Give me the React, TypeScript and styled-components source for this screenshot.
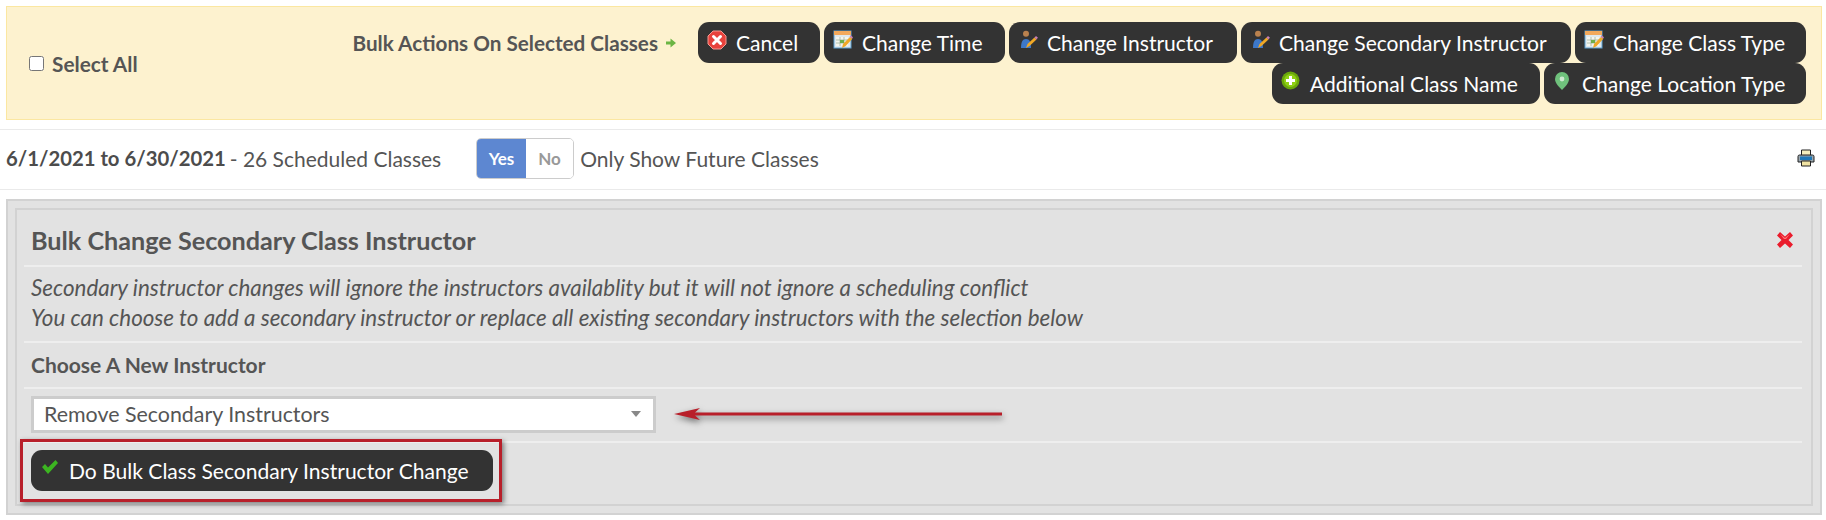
import React from "react";
import styled, { createGlobalStyle } from "styled-components";

const Global = createGlobalStyle`
  html, body { margin: 0; padding: 0; background: #fff; }
  body { font-family: Lato, "Open Sans", "Liberation Sans", sans-serif; color: #555; }
  * { box-sizing: border-box; }
`;

const Page = styled.div`
  position: relative;
  width: 1826px;
  height: 520px;
  padding-top: 6px;
  overflow: hidden;
`;

const BulkBar = styled.div`
  display: flex;
  align-items: center;
  height: 114px;
  margin: 0 4px 0 6px;
  padding: 0 15px 0 22px;
  background: #fdf2cf;
  border: 1px solid #fbe7a1;
`;

const SelectAllLabel = styled.label`
  display: flex;
  align-items: center;
  gap: 8px;
  flex: none;
  font-size: 20.8px;
  font-weight: 700;
  color: #555;
`;

const Check = styled.input`
  width: 15px;
  height: 15px;
  margin: 0;
`;

const Actions = styled.div`
  flex: 1;
  align-self: flex-start;
  display: flex;
  flex-wrap: wrap;
  justify-content: flex-end;
  align-items: flex-start;
  column-gap: 4px;
  padding-top: 15px;
  padding-left: 200px;
`;

const ActionsTitle = styled.div`
  display: flex;
  align-items: center;
  height: 41px;
  margin-right: 18px;
  font-size: 20.7px;
  font-weight: 700;
  color: #555;
  svg { margin-left: 8px; }
`;

const DarkButton = styled.button<{ $w: number }>`
  display: flex;
  align-items: center;
  width: ${(p) => p.$w}px;
  height: 41px;
  padding: 0 0 0 9px;
  background: #333;
  border: 0;
  border-radius: 11px;
  color: #fff;
  font-family: inherit;
  font-size: 21.05px;
  white-space: nowrap;
`;

const IconSlot = styled.span`
  display: flex;
  flex: none;
  width: 20px;
  height: 20px;
  margin: -6px 9px 0 0;
  align-items: center;
  justify-content: center;
`;

const FilterRow = styled.div`
  display: flex;
  align-items: center;
  height: 61px;
  margin-top: 9px;
  padding: 0 11px 3px 6px;
  border-top: 1px solid #eaeaea;
  border-bottom: 1px solid #eaeaea;
  font-size: 21px;
  color: #555;
`;

const Dates = styled.span`
  font-size: 20.3px;
  font-weight: 700;
  color: #4c4c4c;
`;

const Count = styled.span`
  margin-left: 4px;
`;

const Toggle = styled.div`
  display: flex;
  width: 98px;
  height: 41px;
  margin: 0 6px 0 35px;
  border: 1px solid #ccc;
  border-radius: 5px;
  overflow: hidden;
  font-size: 17px;
  font-weight: 700;
`;

const ToggleSide = styled.span<{ $on?: boolean }>`
  display: flex;
  align-items: center;
  justify-content: center;
  width: ${(p) => (p.$on ? "49px" : "48px")};
  background: ${(p) => (p.$on ? "#5d87d1" : "#fff")};
  color: ${(p) => (p.$on ? "#fff" : "#999")};
`;

const Spacer = styled.div`
  flex: 1;
`;

const Panel = styled.div`
  height: 316px;
  margin: 9px 4px 0 6px;
  padding: 7px 7px;
  background: #e2e2e2;
  border: 2px solid #d2d2d2;
`;

const Inner = styled.div`
  height: 298px;
  padding: 0 9px 0 7px;
  border: 2px solid #d2d2d2;
`;

const Row = styled.div<{ $h: number }>`
  display: flex;
  align-items: center;
  height: ${(p) => p.$h}px;
  padding-left: 8px;
  border-bottom: 2px solid #eeeeee;
`;

const TitleRow = styled(Row)`
  padding-top: 4px;
`;

const LastRow = styled.div`
  padding: 7px 0 0 7px;
`;

const Title = styled.h2`
  flex: 1;
  margin: 0 0 0 -1px;
  font-size: 25.2px;
  font-weight: 700;
  color: #555;
`;

const CloseX = styled.span`
  display: flex;
  margin-right: 8px;
`;

const Note = styled.div`
  margin: -2px 0 0 -1px;
  font-size: 22.4px;
  font-style: italic;
  line-height: 30px;
  color: #555;
`;

const FieldLabel = styled.div`
  margin: -2px 0 0 -1px;
  font-size: 21px;
  font-weight: 700;
  color: #555;
`;

const SelectBox = styled.div`
  display: flex;
  align-items: center;
  justify-content: space-between;
  width: 625px;
  height: 37px;
  margin: -2px 0 0 -1px;
  padding: 0 12px 0 10px;
  background: #fff;
  border: 3px solid #ccc;
  font-size: 21.4px;
  color: #555;
`;

const Caret = styled.span`
  width: 0;
  height: 0;
  border-left: 5px solid transparent;
  border-right: 5px solid transparent;
  border-top: 6px solid #888;
`;

const RedBox = styled.div`
  position: absolute;
  left: 20px;
  top: 439px;
  width: 482px;
  height: 63px;
  border: 3px solid #b81f2a;
  box-shadow: 2px 2px 5px rgba(0, 0, 0, 0.45);
`;

const ArrowMark = styled.svg`
  position: absolute;
  left: 670px;
  top: 400px;
  filter: drop-shadow(1px 3px 3px rgba(0, 0, 0, 0.5));
`;

const Cancel = () => (
  <svg width="20" height="20" viewBox="0 0 20 20">
    <path d="M6 1h8l5 5v8l-5 5H6l-5-5V6z" fill="#e8423c" stroke="#f39a92" strokeWidth="1" />
    <path d="M6.500 6.500l7 7M13.500 6.500l-7 7" stroke="#fff" strokeWidth="3" strokeLinecap="round" />
  </svg>
);

const Calendar = () => (
  <svg width="20" height="20" viewBox="0 0 20 20">
    <rect x="1" y="1" width="17" height="17" fill="#dfe9ee" stroke="#5d9fd0" />
    <rect x="1" y="1" width="17" height="4" fill="#f2a95c" />
    <path d="M3 7h12v9H3z" fill="#f5f5ee" />
    <path d="M7 7v9M11 7v9M3 10h12M3 13h12" stroke="#9fb4a0" strokeWidth="0.8" />
    <rect x="7" y="10" width="4" height="3" fill="#6fae4a" />
    <path d="M9 18l1-4 7-7 2.400 1.800-7 7.400z" fill="#f0a826" />
    <path d="M16.500 6.500l1.500-1 2 1.800-1 1.400z" fill="#c97fb4" />
  </svg>
);

const Instructor = () => (
  <svg width="20" height="20" viewBox="0 0 20 20">
    <circle cx="8" cy="3.800" r="3" fill="#b9814e" />
    <path d="M3 18c0-6 1.500-9 5-9s5 3 5 9z" fill="#3d78c9" />
    <path d="M8 18l1.500-4 7-6.500 2 2-7 6.500z" fill="#f0a826" />
    <path d="M16.500 7.500l1.500-1.500 2 1.800-1.800 1.700z" fill="#c97fb4" />
  </svg>
);

const Plus = () => (
  <svg width="20" height="20" viewBox="0 0 20 20">
    <circle cx="9.500" cy="9.500" r="9" fill="#6aa80c" />
    <circle cx="9.500" cy="9.500" r="6.500" fill="#8fd014" />
    <path d="M9.500 5v9M5 9.500h9" stroke="#fff" strokeWidth="3" />
  </svg>
);

const Pin = () => (
  <svg width="20" height="20" viewBox="0 0 20 20">
    <path d="M9 1a7 7 0 0 0-7 7c0 4 4 8 7 11 3-3 7-7 7-11a7 7 0 0 0-7-7z" fill="#6fc17c" />
    <circle cx="9" cy="8" r="2.400" fill="#cfe9d2" />
  </svg>
);

const Tick = () => (
  <svg width="20" height="20" viewBox="0 0 20 20">
    <path d="M2 9l3-3 3 3.500L15.500 2 18 5 8 16z" fill="#3cb521" />
  </svg>
);

const Action = ({ icon, label, w }: { icon: React.ReactNode; label: string; w: number }) => (
  <DarkButton $w={w}>
    <IconSlot>{icon}</IconSlot>
    {label}
  </DarkButton>
);

export default function App() {
  return (
    <Page>
      <Global />
      <BulkBar>
        <SelectAllLabel>
          <Check type="checkbox" />
          Select All
        </SelectAllLabel>
        <Actions>
          <ActionsTitle>
            Bulk Actions On Selected Classes
            <svg width="10" height="10" viewBox="0 0 10 10">
              <path d="M0 3.500h4.500V.5L10 5 4.500 9.500v-3H0z" fill="#6bb544" />
            </svg>
          </ActionsTitle>
          <Action w={122} icon={<Cancel />} label="Cancel" />
          <Action w={181} icon={<Calendar />} label="Change Time" />
          <Action w={228} icon={<Instructor />} label="Change Instructor" />
          <Action w={330} icon={<Instructor />} label="Change Secondary Instructor" />
          <Action w={231} icon={<Calendar />} label="Change Class Type" />
          <Action w={268} icon={<Plus />} label="Additional Class Name" />
          <Action w={262} icon={<Pin />} label="Change Location Type" />
        </Actions>
      </BulkBar>

      <FilterRow>
        <Dates>6/1/2021 to 6/30/2021</Dates>
        <Count>- 26 Scheduled Classes</Count>
        <Toggle>
          <ToggleSide $on>Yes</ToggleSide>
          <ToggleSide>No</ToggleSide>
        </Toggle>
        Only Show Future Classes
        <Spacer />
        <svg width="18" height="18" viewBox="0 0 18 18">
          <path d="M4.500 1h9v6h-9z" fill="#f5eebc" stroke="#222" />
          <path d="M1 7.500a1.500 1.500 0 0 1 1.500-1.500h13A1.500 1.500 0 0 1 17 7.500V13H1z" fill="#9aa7b0" stroke="#222" />
          <path d="M3 7.500h12V11H3z" fill="#1f78b8" />
          <path d="M4.500 12h9v5h-9z" fill="#f0e2a2" stroke="#222" />
        </svg>
      </FilterRow>

      <Panel>
        <Inner>
          <TitleRow $h={57}>
            <Title>Bulk Change Secondary Class Instructor</Title>
            <CloseX>
              <svg width="18" height="18" viewBox="0 0 18 18">
                <path d="M4 1l5 4.500L14 1l3 3.500L12.500 9l4.500 4.500-3 3.500-5-4.500L4 17l-3-3.500L5.500 9 1 4.500z" fill="#ea1c2c" />
                <path d="M4 3l5 4 5-4-4 5H8z" fill="#f77" />
              </svg>
            </CloseX>
          </TitleRow>
          <Row $h={76}>
            <Note>
              Secondary instructor changes will ignore the instructors availablity but it will not ignore a scheduling conflict
              <br />
              You can choose to add a secondary instructor or replace all existing secondary instructors with the selection below
            </Note>
          </Row>
          <Row $h={46}>
            <FieldLabel>Choose A New Instructor</FieldLabel>
          </Row>
          <Row $h={54}>
            <SelectBox>
              Remove Secondary Instructors
              <Caret />
            </SelectBox>
          </Row>
          <LastRow>
            <Action w={462} icon={<Tick />} label="Do Bulk Class Secondary Instructor Change" />
          </LastRow>
        </Inner>
      </Panel>

      <RedBox />
      <ArrowMark width="340" height="30" viewBox="0 0 340 30">
        <path d="M4 14L30 8l-5 4.500h307v3H25l5 4.500z" fill="#b81f2a" />
      </ArrowMark>
    </Page>
  );
}
